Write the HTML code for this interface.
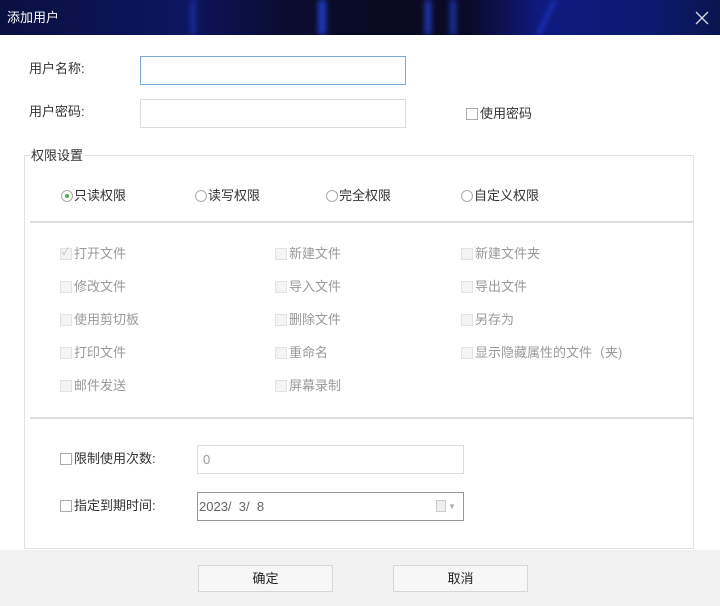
<!DOCTYPE html>
<html><head><meta charset="utf-8"><style>
*{margin:0;padding:0;box-sizing:border-box}
body{width:720px;height:606px;position:relative;background:#fff;font-family:"Liberation Sans","Noto Sans CJK SC",sans-serif;font-size:13px;color:#333;overflow:hidden}
.a{position:absolute;white-space:nowrap;line-height:16px}
.hdr{position:absolute;left:0;top:0;width:720px;height:35px;background:linear-gradient(90deg,#0a1040 0%,#0c1560 25%,#0a0c30 40%,#0a0a20 55%,#0a0a28 65%,#0f1a80 75%,#0b1a70 90%,#0a1550 100%);overflow:hidden}
.st{position:absolute;top:0;width:6px;height:35px;background:#2a4fff;filter:blur(3px);opacity:.7}
.in{position:absolute;border:1px solid #dcdcdc;background:#fff}
.cb{position:absolute;width:12px;height:12px;border:1px solid #aaa;background:#fff}
.cbd{position:absolute;width:12px;height:12px;border:1px solid #e2e2e2;background:#f4f4f4}
.g{color:#999}
.rd{position:absolute;width:12px;height:12px;border:1px solid #aaa;border-radius:50%;background:#fff}
.btn{position:absolute;width:135px;height:27px;border:1px solid #d6d6d6;background:#f7f7f7;text-align:center;line-height:25px;color:#222}
</style></head><body>
<div class="hdr">
<div class="st" style="left:190px;opacity:.4"></div>
<div class="st" style="left:318px;width:8px"></div>
<div class="st" style="left:425px"></div>
<div class="st" style="left:450px;opacity:.6"></div>
<div class="st" style="left:545px;width:3px;transform:skewX(-25deg)"></div>
<div class="a" style="left:7px;top:10px;color:#fff;font-size:13px">添加用户</div>
<svg style="position:absolute;left:695px;top:11px" width="14" height="14"><path d="M1 1L13 13M13 1L1 13" stroke="#ddd" stroke-width="1.3"/></svg>
</div>
<div class="a" style="left:29px;top:61px">用户名称:</div>
<div class="in" style="left:140px;top:56px;width:266px;height:29px;border-color:#7aa9d6"></div>
<div class="a" style="left:29px;top:104px">用户密码:</div>
<div class="in" style="left:140px;top:99px;width:266px;height:29px"></div>
<div class="cb" style="left:466px;top:108px"></div><div class="a" style="left:480px;top:106px">使用密码</div>

<div style="position:absolute;left:24px;top:155px;width:670px;height:394px;border:1px solid #e2e2e2"></div>
<div class="a" style="left:30px;top:148px;background:#fff;padding:0 2px 0 1px">权限设置</div>
<div class="rd" style="left:61px;top:190px"></div><div style="position:absolute;left:65px;top:194px;width:4px;height:4px;border-radius:50%;background:#4caf50"></div>
<div class="a" style="left:74px;top:188px">只读权限</div>
<div class="rd" style="left:195px;top:190px"></div><div class="a" style="left:208px;top:188px">读写权限</div>
<div class="rd" style="left:326px;top:190px"></div><div class="a" style="left:339px;top:188px">完全权限</div>
<div class="rd" style="left:461px;top:190px"></div><div class="a" style="left:474px;top:188px">自定义权限</div>
<div style="position:absolute;left:30px;top:221px;width:663px;height:2px;background:#ddd"></div>

<div class="cbd" style="left:60px;top:248px"></div><div class="a g" style="left:62px;top:245px;font-size:10px;color:#bbb">✓</div><div class="a g" style="left:74px;top:246px">打开文件</div>
<div class="cbd" style="left:275px;top:248px"></div><div class="a g" style="left:289px;top:246px">新建文件</div>
<div class="cbd" style="left:461px;top:248px"></div><div class="a g" style="left:475px;top:246px">新建文件夹</div>
<div class="cbd" style="left:60px;top:281px"></div><div class="a g" style="left:74px;top:279px">修改文件</div>
<div class="cbd" style="left:275px;top:281px"></div><div class="a g" style="left:289px;top:279px">导入文件</div>
<div class="cbd" style="left:461px;top:281px"></div><div class="a g" style="left:475px;top:279px">导出文件</div>
<div class="cbd" style="left:60px;top:314px"></div><div class="a g" style="left:74px;top:312px">使用剪切板</div>
<div class="cbd" style="left:275px;top:314px"></div><div class="a g" style="left:289px;top:312px">删除文件</div>
<div class="cbd" style="left:461px;top:314px"></div><div class="a g" style="left:475px;top:312px">另存为</div>
<div class="cbd" style="left:60px;top:347px"></div><div class="a g" style="left:74px;top:345px">打印文件</div>
<div class="cbd" style="left:275px;top:347px"></div><div class="a g" style="left:289px;top:345px">重命名</div>
<div class="cbd" style="left:461px;top:347px"></div><div class="a g" style="left:475px;top:345px">显示隐藏属性的文件（夹)</div>
<div class="cbd" style="left:60px;top:380px"></div><div class="a g" style="left:74px;top:378px">邮件发送</div>
<div class="cbd" style="left:275px;top:380px"></div><div class="a g" style="left:289px;top:378px">屏幕录制</div>
<div style="position:absolute;left:30px;top:417px;width:663px;height:2px;background:#ddd"></div>

<div class="cb" style="left:60px;top:453px"></div><div class="a" style="left:74px;top:451px">限制使用次数:</div>
<div class="in" style="left:197px;top:445px;width:267px;height:29px"></div><div class="a g" style="left:203px;top:452px">0</div>
<div class="cb" style="left:60px;top:500px"></div><div class="a" style="left:74px;top:498px">指定到期时间:</div>
<div class="in" style="left:197px;top:492px;width:267px;height:29px;border-color:#999"></div><div class="a" style="left:199px;top:499px;color:#666">2023/&nbsp; 3/&nbsp; 8</div>
<div style="position:absolute;left:436px;top:500px;width:10px;height:12px;border:1px solid #ccc;background:#eee"></div>
<div class="a" style="left:448px;top:499px;font-size:8px;color:#aaa">▼</div>

<div style="position:absolute;left:0;top:550px;width:720px;height:56px;background:#f2f2f2"></div>
<div class="btn" style="left:198px;top:565px">确定</div>
<div class="btn" style="left:393px;top:565px">取消</div>
</body></html>
